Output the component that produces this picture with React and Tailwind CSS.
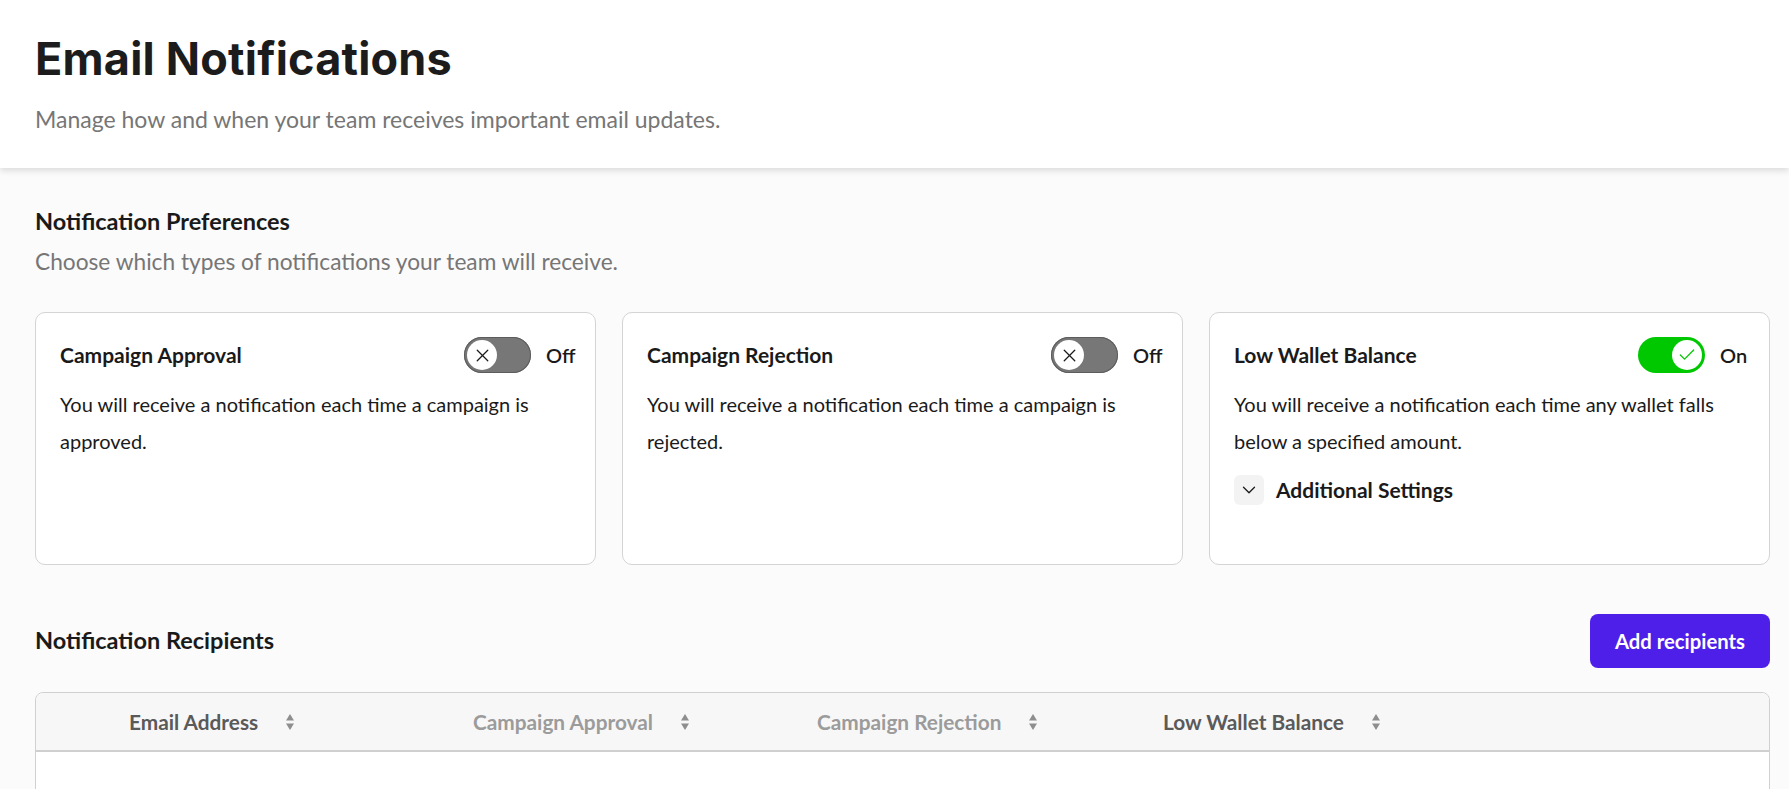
import { X, Check, ChevronDown } from "lucide-react";

const cards = [
  {
    title: "Campaign Approval",
    on: false,
    text: "You will receive a notification each time a campaign is approved.",
  },
  {
    title: "Campaign Rejection",
    on: false,
    text: "You will receive a notification each time a campaign is rejected.",
  },
  {
    title: "Low Wallet Balance",
    on: true,
    text: "You will receive a notification each time any wallet falls below a specified amount.",
    extra: true,
  },
];

const columns = [
  { label: "Email Address", muted: false },
  { label: "Campaign Approval", muted: true },
  { label: "Campaign Rejection", muted: true },
  { label: "Low Wallet Balance", muted: false },
];

const Toggle = ({ on }) => (
  <div className="flex items-center gap-[15px]">
    <div
      className={`flex h-[36px] w-[67px] items-center rounded-full px-[3px] ${
        on ? "justify-end bg-[#00c800]" : "justify-start bg-[#777777] ring-1 ring-inset ring-[#5c5c5c]"
      }`}
    >
      <span className="flex size-[30px] items-center justify-center rounded-full bg-white">
        {on ? (
          <Check className="size-[20px] text-[#00c800]" strokeWidth={1.5} />
        ) : (
          <X className="size-[21px] text-[#1a1a1a]" strokeWidth={1.5} />
        )}
      </span>
    </div>
    <span className="w-[25px] text-[20px] font-semibold text-[#1a1a1a]">{on ? "On" : "Off"}</span>
  </div>
);

const SortIcon = () => (
  <svg width="10" height="18" viewBox="0 0 10 18" className="ml-[27px]">
    <path d="M5 1 L9 7.5 L1 7.5 Z" fill="#8e8e8e" />
    <path d="M5 17 L9 10.5 L1 10.5 Z" fill="#8e8e8e" />
  </svg>
);

export default function App() {
  return (
    <div className="min-h-screen bg-[#fbfbfb] font-['Lato',sans-serif] text-[#1a1a1a]">
      <header className="relative z-10 h-[168px] bg-white pl-[35px] pt-[32px] shadow-[0_3px_6px_rgba(0,0,0,0.12)]">
        <h1 className="font-['Inter',sans-serif] text-[45px] font-bold leading-[54px] tracking-[0.2px] text-[#1c1c1c]">
          Email Notifications
        </h1>
        <p className="mt-[18px] text-[23px] leading-[30px] text-[#767676]">
          Manage how and when your team receives important email updates.
        </p>
      </header>

      <main className="pl-[35px] pr-[19px] pt-[38px]">
        <h2 className="text-[23.5px] font-bold leading-[30px]">Notification Preferences</h2>
        <p className="mt-[10px] text-[22.7px] leading-[32px] text-[#767676]">
          Choose which types of notifications your team will receive.
        </p>

        <div className="mt-[34px] grid grid-cols-3 gap-[26px]">
          {cards.map((card) => (
            <div
              key={card.title}
              className="h-[253px] rounded-[10px] border border-[#d4d4d4] bg-white pl-[24px] pr-[24px] pt-[24px]"
            >
              <div className="flex h-[36px] items-center justify-between">
                <span className="text-[21px] font-bold">{card.title}</span>
                <Toggle on={card.on} />
              </div>
              <p className="mt-[13px] text-[20px] leading-[37px]">{card.text}</p>
              {card.extra && (
                <div className="mt-[14px] flex items-center gap-[12px]">
                  <span className="flex size-[30px] items-center justify-center rounded-md bg-[#f3f3f3]">
                    <ChevronDown className="size-[22px] text-[#1a1a1a]" strokeWidth={1.4} />
                  </span>
                  <span className="text-[21px] font-bold">Additional Settings</span>
                </div>
              )}
            </div>
          ))}
        </div>

        <div className="mt-[49px] flex h-[54px] items-center justify-between">
          <h2 className="text-[23.5px] font-bold">Notification Recipients</h2>
          <button
            type="button"
            className="h-[54px] rounded-[8px] bg-[#4f1fea] px-[25px] text-[20.3px] font-bold text-white"
          >
            Add recipients
          </button>
        </div>

        <div className="mt-[24px] h-[200px] rounded-t-[8px] border border-[#d0d0d0] bg-white">
          <div className="grid h-[59px] grid-cols-[344px_344px_346px_344px] items-center rounded-t-[8px] border-b-2 border-[#cfcfcf] bg-[#f7f7f7] pl-[93px]">
            {columns.map((col) => (
              <div key={col.label} className="flex items-center">
                <span
                  className={`text-[20.8px] font-bold ${col.muted ? "text-[#9b9b9b]" : "text-[#5a5a5a]"}`}
                >
                  {col.label}
                </span>
                <SortIcon />
              </div>
            ))}
          </div>
        </div>
      </main>
    </div>
  );
}
